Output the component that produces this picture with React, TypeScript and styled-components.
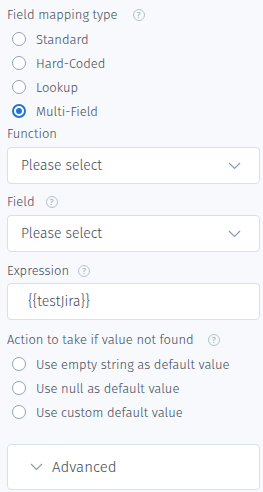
import React from "react";
import styled, { createGlobalStyle } from "styled-components";

const Global = createGlobalStyle`
  html, body { margin: 0; padding: 0; background: #f7f9fc; }
  body { font-family: "Fira Sans", "Noto Sans", "Open Sans", sans-serif; font-weight: 300; color: #434c5b; }
`;

const Page = styled.div`
  padding: 5px 3px 0 7px;
  width: 253px;
  display: flex;
  flex-direction: column;
`;

const LabelRow = styled.div<{ $mt?: number }>`
  display: flex;
  align-items: center;
  height: 18px;
  font-size: 13px;
  color: #434c5b;
  margin-top: ${(p) => p.$mt ?? 0}px;
`;

const HelpIcon = styled.span<{ $gap: number }>`
  margin-left: ${(p) => p.$gap}px;
  margin-top: 2px;
  width: 12px;
  height: 12px;
  border: 1px solid #b3c2d1;
  border-radius: 50%;
  display: inline-flex;
  align-items: center;
  justify-content: center;
  font-size: 9px;
  font-weight: 400;
  color: #9fb0c2;
  box-sizing: border-box;
  line-height: 1;
`;

const RadioList = styled.div`
  display: flex;
  flex-direction: column;
  margin-top: 4px;
`;

const RadioRow = styled.label`
  display: flex;
  align-items: center;
  height: 24px;
  font-size: 13px;
  color: #434c5b;
  padding-left: 5px;
`;

const RadioCircle = styled.span<{ $checked?: boolean }>`
  width: 14px;
  height: 14px;
  border-radius: 50%;
  box-sizing: border-box;
  border: ${(p) => (p.$checked ? "2px solid #1f74d6" : "1.5px solid #8fa3b7")};
  background: #fff;
  display: inline-flex;
  align-items: center;
  justify-content: center;
  margin-right: 10px;
  flex: none;
  &::after {
    content: "";
    display: ${(p) => (p.$checked ? "block" : "none")};
    width: 6px;
    height: 6px;
    border-radius: 50%;
    background: #1f74d6;
  }
`;

const Box = styled.div<{ $mt: number; $pl: number }>`
  margin-top: ${(p) => p.$mt}px;
  height: 37px;
  box-sizing: border-box;
  border: 1px solid #d5e1ec;
  border-radius: 4px;
  background: #fff;
  display: flex;
  align-items: center;
  justify-content: space-between;
  padding: 0 18px 0 ${(p) => p.$pl}px;
  font-size: 14px;
  color: #434c5b;
`;

const AdvancedBox = styled.div`
  margin-top: 20px;
  height: 46px;
  box-sizing: border-box;
  border: 1px solid #d5e1ec;
  border-radius: 4px;
  background: #fff;
  display: flex;
  align-items: center;
  padding-left: 22px;
  font-size: 15px;
  color: #434c5b;
  gap: 9px;
`;

const Chevron = ({ color = "#8a9cb0" }: { color?: string }) => (
  <svg width="13" height="8" viewBox="0 0 13 8" fill="none">
    <path d="M1 1l5.5 5.5L12 1" stroke={color} strokeWidth="1.2" />
  </svg>
);

const Help = ({ gap }: { gap: number }) => <HelpIcon $gap={gap}>?</HelpIcon>;

const Radio = ({ label, checked }: { label: string; checked?: boolean }) => (
  <RadioRow>
    <RadioCircle $checked={checked} />
    {label}
  </RadioRow>
);

export default function App() {
  return (
    <>
      <Global />
      <Page>
        <LabelRow>
          Field mapping type
          <Help gap={15} />
        </LabelRow>
        <RadioList>
          <Radio label="Standard" />
          <Radio label="Hard-Coded" />
          <Radio label="Lookup" />
          <Radio label="Multi-Field" checked />
        </RadioList>
        <LabelRow $mt={1}>Function</LabelRow>
        <Box $mt={5} $pl={13}>
          Please select
          <Chevron />
        </Box>
        <LabelRow $mt={8}>
          Field
          <Help gap={11} />
        </LabelRow>
        <Box $mt={5} $pl={13}>
          Please select
          <Chevron />
        </Box>
        <LabelRow $mt={9}>
          Expression
          <Help gap={9} />
        </LabelRow>
        <Box $mt={4} $pl={20}>
          {"{{testJira}}"}
        </Box>
        <LabelRow $mt={10}>
          Action to take if value not found
          <Help gap={14} />
        </LabelRow>
        <RadioList>
          <Radio label="Use empty string as default value" />
          <Radio label="Use null as default value" />
          <Radio label="Use custom default value" />
        </RadioList>
        <AdvancedBox>
          <Chevron />
          Advanced
        </AdvancedBox>
      </Page>
    </>
  );
}
